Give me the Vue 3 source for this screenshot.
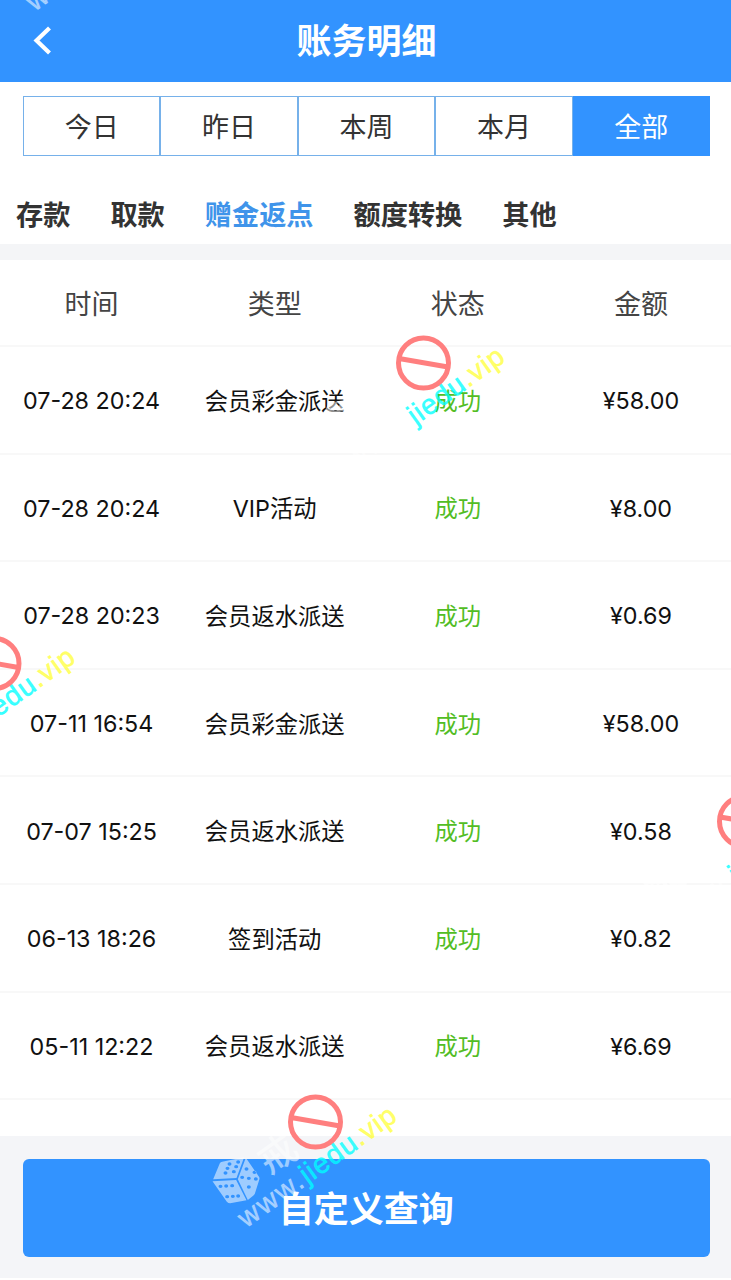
<script setup>
import { ref } from "vue";

const ranges = ["今日", "昨日", "本周", "本月", "全部"];
const tabs = ["存款", "取款", "赠金返点", "额度转换", "其他"];
const columns = ["时间", "类型", "状态", "金额"];

const activeRange = ref("全部");
const activeTab = ref("赠金返点");

const records = ref([
  { id: 1, time: "07-28 20:24", type: "会员彩金派送", status: "成功", amount: "58.00" },
  { id: 2, time: "07-28 20:24", type: "VIP活动", status: "成功", amount: "8.00" },
  { id: 3, time: "07-28 20:23", type: "会员返水派送", status: "成功", amount: "0.69" },
  { id: 4, time: "07-11 16:54", type: "会员彩金派送", status: "成功", amount: "58.00" },
  { id: 5, time: "07-07 15:25", type: "会员返水派送", status: "成功", amount: "0.58" },
  { id: 6, time: "06-13 18:26", type: "签到活动", status: "成功", amount: "0.82" },
  { id: 7, time: "05-11 12:22", type: "会员返水派送", status: "成功", amount: "6.69" },
]);

// centre of the red ring of every stamp
const stamps = [
  { x: 423.5, y: 363 },
  { x: -6, y: 663.5 },
  { x: 744.5, y: 821.5 },
  { x: 315.5, y: 1122 },
];

const pips = [
  [72, 72], [98, 66], [66, 85], [92, 80], [60, 99], [85, 95],
  [123, 87], [110, 112], [130, 115], [151, 117], [147, 97], [130, 141],
  [45, 139], [62, 138], [80, 137], [65, 170], [82, 169], [98, 168],
];

const dicePath =
  "M23 118L43 70Q45 66 50 65L116 52L93 114Z" +
  "M121 53L161 111Q163 115 161 120L148 161Q146 165 142 168L127 180L97 118Z" +
  "M21 124L92 120L123 181L74 190Q68 190 64 185Z" +
  pips.map(([x, y]) => `M${x - 6} ${y}a6 5 0 1 0 12 0a6 5 0 1 0 -12 0Z`).join("");
</script>

<template>
  <main class="page">
    <header class="navbar">
      <button class="back" aria-label="返回">
        <svg width="20" height="30" viewBox="0 0 20 30">
          <path d="M17.5 2L4.5 14.5L17.5 27" fill="none" stroke="#fff" stroke-width="4.2" />
        </svg>
      </button>
      <h1>账务明细</h1>
    </header>

    <div class="ranges">
      <button
        v-for="range in ranges"
        :key="range"
        :class="{ active: range === activeRange }"
        @click="activeRange = range"
      >
        {{ range }}
      </button>
    </div>

    <nav class="tabs">
      <button
        v-for="tab in tabs"
        :key="tab"
        :class="{ active: tab === activeTab }"
        @click="activeTab = tab"
      >
        {{ tab }}
      </button>
    </nav>

    <section class="table">
      <div class="row head">
        <span v-for="column in columns" :key="column">{{ column }}</span>
      </div>
      <div v-for="record in records" :key="record.id" class="row">
        <span class="number">{{ record.time }}</span>
        <span>{{ record.type }}</span>
        <span class="success">{{ record.status }}</span>
        <span class="number">¥{{ record.amount }}</span>
      </div>
    </section>

    <footer>
      <button class="query">自定义查询</button>
    </footer>

    <svg class="stamps" width="731" height="1280" viewBox="0 0 731 1280">
      <text class="site pale" transform="translate(34.5 12) rotate(-35.5)">w</text>
      <g v-for="(stamp, i) in stamps" :key="i" :transform="`translate(${stamp.x} ${stamp.y})`">
        <path class="pale" :d="dicePath" fill-rule="evenodd" transform="translate(-110 18) scale(0.3333)" />
        <text class="pale name" transform="translate(-46 54) rotate(-35)">戒</text>
        <text class="site" transform="translate(-69.5 106.5) rotate(-35.5)">
          <tspan class="pale www">www.</tspan><tspan class="cyan">jiedu</tspan><tspan class="yellow">.vip</tspan>
        </text>
        <circle class="ring" r="25" />
        <path class="ring" d="M-24.5 -4.5L24.5 4" />
      </g>
    </svg>
  </main>
</template>

<style>
body {
  margin: 0;
  background-color: #fff;
}
</style>

<style scoped>
.page {
  position: relative;
  width: 731px;
  height: 1280px;
  overflow: hidden;
  display: flex;
  flex-direction: column;
  font-family: Inter, "Noto Sans CJK SC", sans-serif;
  color: #333;
}

button {
  border: none;
  padding: 0;
  background: none;
  font-family: inherit;
  color: inherit;
  cursor: pointer;
}

.navbar {
  height: 82px;
  flex-shrink: 0;
  display: grid;
  grid-template-columns: 81px 1fr 79px;
  align-items: center;
  background-color: #3293ff;
  color: #fff;
}

.back {
  display: flex;
  padding-left: 32px;
}

h1 {
  margin: 0;
  font-size: 35px;
  line-height: 80px;
  font-weight: 700;
  text-align: center;
}

.ranges {
  height: 60px;
  flex-shrink: 0;
  margin: 14px 21px 0 23px;
  display: flex;
}

.ranges button {
  flex: 1;
  padding-bottom: 2px;
  border: 1px solid #76b1ea;
  font-size: 27px;
}

.ranges button.active {
  border-color: #3293ff;
  background-color: #3293ff;
  color: #fff;
}

.tabs {
  height: 87.5px;
  flex-shrink: 0;
  box-sizing: border-box;
  display: flex;
  align-items: flex-start;
  gap: 40px;
  padding: 32px 0 0 16px;
}

.tabs button {
  font-size: 27.2px;
  line-height: 56px;
  font-weight: 700;
}

.tabs button.active {
  color: #3f94ea;
}

.table {
  height: 876px;
  flex-shrink: 0;
  border-top: 16px solid #f4f5f7;
}

.row {
  height: 107.6px;
  box-sizing: border-box;
  margin-right: -1.5px;
  display: grid;
  grid-template-columns: repeat(4, 1fr);
  align-items: center;
  text-align: center;
  border-bottom: 2px solid #f8f8f8;
  font-size: 23.3px;
  color: #111;
}

.row.head {
  height: 87.5px;
  font-size: 27px;
  color: #444;
}

.row .number {
  padding-top: 2px;
}

.row .success {
  color: #52bd24;
}

footer {
  flex-shrink: 0;
  height: 142.5px;
  box-sizing: border-box;
  padding: 23px 21.5px 22px 23px;
  background-color: #f4f5f8;
}

.query {
  width: 100%;
  height: 98px;
  padding-bottom: 2px;
  border-radius: 6px;
  background-color: #3293ff;
  color: #fff;
  font-size: 35px;
  font-weight: 700;
}

.stamps {
  position: absolute;
  top: 0;
  left: 0;
  pointer-events: none;
}

.pale {
  fill: rgba(255, 255, 255, 0.53);
}

.name {
  font-family: "Noto Sans CJK SC", sans-serif;
  font-size: 38px;
  font-weight: 500;
}

.site {
  font-family: "Liberation Sans", sans-serif;
  font-size: 28px;
  letter-spacing: 1.1px;
  stroke: rgba(255, 255, 255, 0.3);
  stroke-width: 0.8;
}

.www {
  letter-spacing: 2.2px;
}

.cyan {
  fill: rgba(0, 255, 255, 0.75);
  stroke: rgba(0, 255, 255, 0.6);
}

.yellow {
  fill: rgba(255, 255, 60, 0.75);
  stroke: rgba(255, 255, 60, 0.6);
}

.ring {
  fill: none;
  stroke: #ff7f7f;
  stroke-width: 5;
}
</style>
